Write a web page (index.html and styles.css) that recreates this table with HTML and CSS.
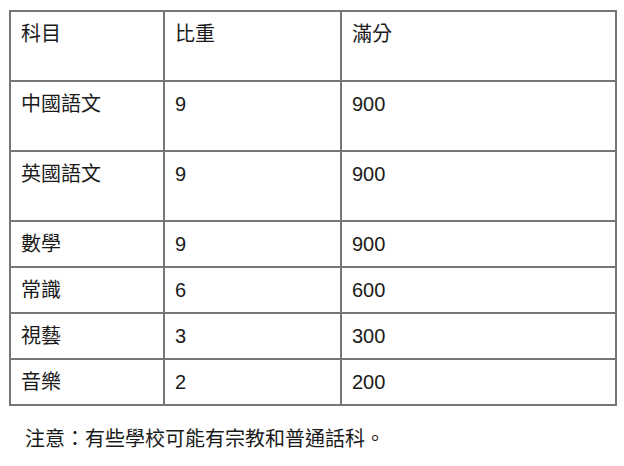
FILE: index.html
```html
<!DOCTYPE html>
<html lang="zh-Hant">
<head>
<meta charset="utf-8">
<link rel="stylesheet" href="styles.css">
</head>
<body>
<table class="grades">
  <colgroup>
    <col class="c1"><col class="c2"><col class="c3">
  </colgroup>
  <tr class="tall"><td>科目</td><td>比重</td><td>滿分</td></tr>
  <tr class="tall"><td>中國語文</td><td>9</td><td>900</td></tr>
  <tr class="tall"><td>英國語文</td><td>9</td><td>900</td></tr>
  <tr><td>數學</td><td>9</td><td>900</td></tr>
  <tr><td>常識</td><td>6</td><td>600</td></tr>
  <tr><td>視藝</td><td>3</td><td>300</td></tr>
  <tr><td>音樂</td><td>2</td><td>200</td></tr>
</table>
<p class="note">注意：有些學校可能有宗教和普通話科。</p>
</body>
</html>
```
FILE: styles.css
```css
html, body {
  margin: 0;
  padding: 0;
  background: #fff;
}
body {
  padding: 10px 8px 0 9px;
  font-family: "Liberation Sans", "Noto Sans CJK TC", sans-serif;
  font-size: 20px;
  color: #1a1a1a;
}
.grades {
  width: 606px;
  border-collapse: collapse;
  table-layout: fixed;
}
.c1 { width: 154px; }
.c2 { width: 177px; }
.c3 { width: 275px; }
.grades td {
  border: 2px solid #767676;
  padding: 10px 10px 10px 10px;
  line-height: 24px;
  height: 24px;
  vertical-align: top;
}
.grades tr.tall td {
  height: 48px;
}
.note {
  margin: 21px 0 0 16px;
  line-height: 24px;
}
```
